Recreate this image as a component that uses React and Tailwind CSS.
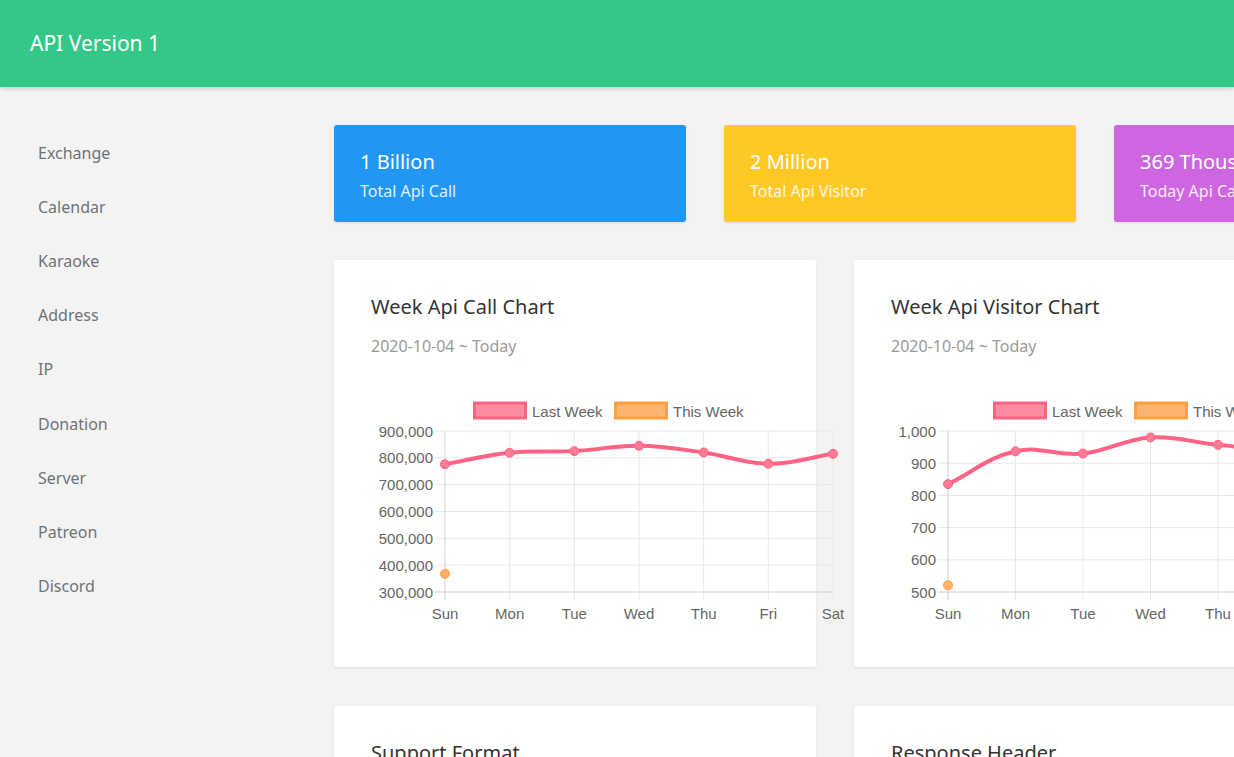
import React from 'react';

const MENU = ['Exchange', 'Calendar', 'Karaoke', 'Address', 'IP', 'Donation', 'Server', 'Patreon', 'Discord'];
const DAYS = ['Sun', 'Mon', 'Tue', 'Wed', 'Thu', 'Fri', 'Sat'];

const STATS = [
  { title: '1 Billion', label: 'Total Api Call', color: 'bg-[#2196f3]' },
  { title: '2 Million', label: 'Total Api Visitor', color: 'bg-[#ffc824]' },
  { title: '369 Thousand', label: 'Today Api Call', color: 'bg-[#cf66e1]' },
];

// chart.js style bezier control points (tension 0.4)
const buildPath = (pts, top, bottom) => {
  const t = 0.4;
  const cps = pts.map((cur, i) => {
    const prev = pts[i - 1] || cur;
    const next = pts[i + 1] || cur;
    const d01 = Math.hypot(cur.x - prev.x, cur.y - prev.y);
    const d12 = Math.hypot(next.x - cur.x, next.y - cur.y);
    const sum = d01 + d12 || 1;
    const fa = (t * d01) / sum;
    const fb = (t * d12) / sum;
    const clamp = (v) => Math.max(top, Math.min(bottom, v));
    return {
      p: { x: cur.x - fa * (next.x - prev.x), y: clamp(cur.y - fa * (next.y - prev.y)) },
      n: { x: cur.x + fb * (next.x - prev.x), y: clamp(cur.y + fb * (next.y - prev.y)) },
    };
  });
  let d = `M${pts[0].x},${pts[0].y}`;
  for (let i = 1; i < pts.length; i++) {
    d += ` C${cps[i - 1].n.x},${cps[i - 1].n.y} ${cps[i].p.x},${cps[i].p.y} ${pts[i].x},${pts[i].y}`;
  }
  return d;
};

const LineChart = ({ ticks, min, max, last, current, plotLeft }) => {
  const top = 36;
  const bottom = 197;
  const right = 462;
  const xAt = (i) => plotLeft + (i * (right - plotLeft)) / 6;
  const yAt = (v) => bottom - ((v - min) / (max - min)) * (bottom - top);
  const pts = last.map((v, i) => ({ x: xAt(i), y: yAt(v) }));
  const font = { fontFamily: '"Liberation Sans", Arial, sans-serif' };

  return (
    <svg width="474" height="240" className="block overflow-visible" style={font}>
      {/* legend */}
      <rect x="103.5" y="8" width="51" height="15" fill="#ff8ba3" stroke="#ff6384" strokeWidth="3" />
      <text x="161" y="16" fontSize="15" fill="#666" dominantBaseline="central">Last Week</text>
      <rect x="244.5" y="8" width="51" height="15" fill="#ffb56f" stroke="#ff9f40" strokeWidth="3" />
      <text x="302" y="16" fontSize="15" fill="#666" dominantBaseline="central">This Week</text>

      {/* grid */}
      {ticks.map((label, i) => {
        const y = top + (i * (bottom - top)) / (ticks.length - 1);
        return (
          <g key={label}>
            <line x1={plotLeft - 10} x2={right} y1={y} y2={y} stroke={i === ticks.length - 1 ? '#cfcfcf' : '#e8e8e8'} strokeWidth="1" />
            <text x={plotLeft - 12} y={y} fontSize="15" fill="#666" textAnchor="end" dominantBaseline="central">{label}</text>
          </g>
        );
      })}
      {DAYS.map((day, i) => (
        <g key={day}>
          <line x1={xAt(i)} x2={xAt(i)} y1={top} y2={bottom + 8} stroke={i === 0 ? '#cfcfcf' : '#e8e8e8'} strokeWidth="1" />
          <text x={xAt(i)} y="218" fontSize="15" fill="#666" textAnchor="middle" dominantBaseline="central">{day}</text>
        </g>
      ))}

      {/* data */}
      <path d={buildPath(pts, top, bottom)} fill="none" stroke="#ff6384" strokeWidth="4" />
      {pts.map((p, i) => (
        <circle key={i} cx={p.x} cy={p.y} r="4.5" fill="#ff7a95" stroke="#ff6384" strokeWidth="1" />
      ))}
      {current.map((v, i) => (
        <circle key={i} cx={xAt(i)} cy={yAt(v)} r="4.5" fill="#ffb066" stroke="#ff9f40" strokeWidth="1" />
      ))}
    </svg>
  );
};

const Card = ({ title, subtitle, children }) => (
  <div className="w-[482px] shrink-0 bg-white rounded-[3px] shadow-[0_1px_3px_rgba(0,0,0,0.08)] pt-[33px] pb-[32px] px-[37px]">
    <h2 className="text-[20px] leading-[28px] text-[#333]">{title}</h2>
    {subtitle && <p className="mt-[13px] text-[16px] leading-[24px] text-[#999]">{subtitle}</p>}
    {children}
  </div>
);

export default function App() {
  return (
    <div
      className="w-full min-h-screen overflow-hidden bg-[#f3f3f3]"
      style={{ fontFamily: '"Noto Sans", "Open Sans", sans-serif' }}
    >
      <header className="h-[87px] bg-[#33c887] flex items-center px-[30px] shadow-[0_2px_4px_rgba(0,0,0,0.15)] relative z-10">
        <h1 className="text-[21px] text-white">API Version 1</h1>
      </header>

      <div className="flex">
        <nav className="w-[296px] shrink-0 pt-[39px] pl-[38px]">
          {MENU.map((item) => (
            <div key={item} className="h-[54.1px] flex items-center text-[16px] text-[#6f7378]">
              {item}
            </div>
          ))}
        </nav>

        <main className="pl-[38px] pt-[38px] flex flex-col gap-[38px]">
          <div className="flex gap-[38px]">
            {STATS.map((s) => (
              <div
                key={s.title}
                className={`w-[352px] h-[97px] shrink-0 rounded-[3px] shadow-[0_1px_3px_rgba(0,0,0,0.1)] pt-[23px] px-[26px] text-white ${s.color}`}
              >
                <div className="text-[20px] leading-[28px] whitespace-nowrap">{s.title}</div>
                <div className="mt-[3px] text-[16px] leading-[24px] text-white/85 whitespace-nowrap">{s.label}</div>
              </div>
            ))}
          </div>

          <div className="flex gap-[38px]">
            <Card title="Week Api Call Chart" subtitle="2020-10-04 ~ Today">
              <div className="mt-[37px]">
                <LineChart
                  ticks={['900,000', '800,000', '700,000', '600,000', '500,000', '400,000', '300,000']}
                  min={300000}
                  max={900000}
                  last={[776000, 819000, 825000, 845000, 820000, 778000, 815000]}
                  current={[368000]}
                  plotLeft={74}
                />
              </div>
            </Card>
            <Card title="Week Api Visitor Chart" subtitle="2020-10-04 ~ Today">
              <div className="mt-[37px]">
                <LineChart
                  ticks={['1,000', '900', '800', '700', '600', '500']}
                  min={500}
                  max={1000}
                  last={[835, 937, 930, 980, 957, 942, 960]}
                  current={[521]}
                  plotLeft={57}
                />
              </div>
            </Card>
          </div>

          <div className="flex gap-[38px] mt-[1px]">
            <Card title="Support Format">
              <div className="h-[200px]" />
            </Card>
            <Card title="Response Header">
              <div className="h-[200px]" />
            </Card>
          </div>
        </main>
      </div>
    </div>
  );
}
